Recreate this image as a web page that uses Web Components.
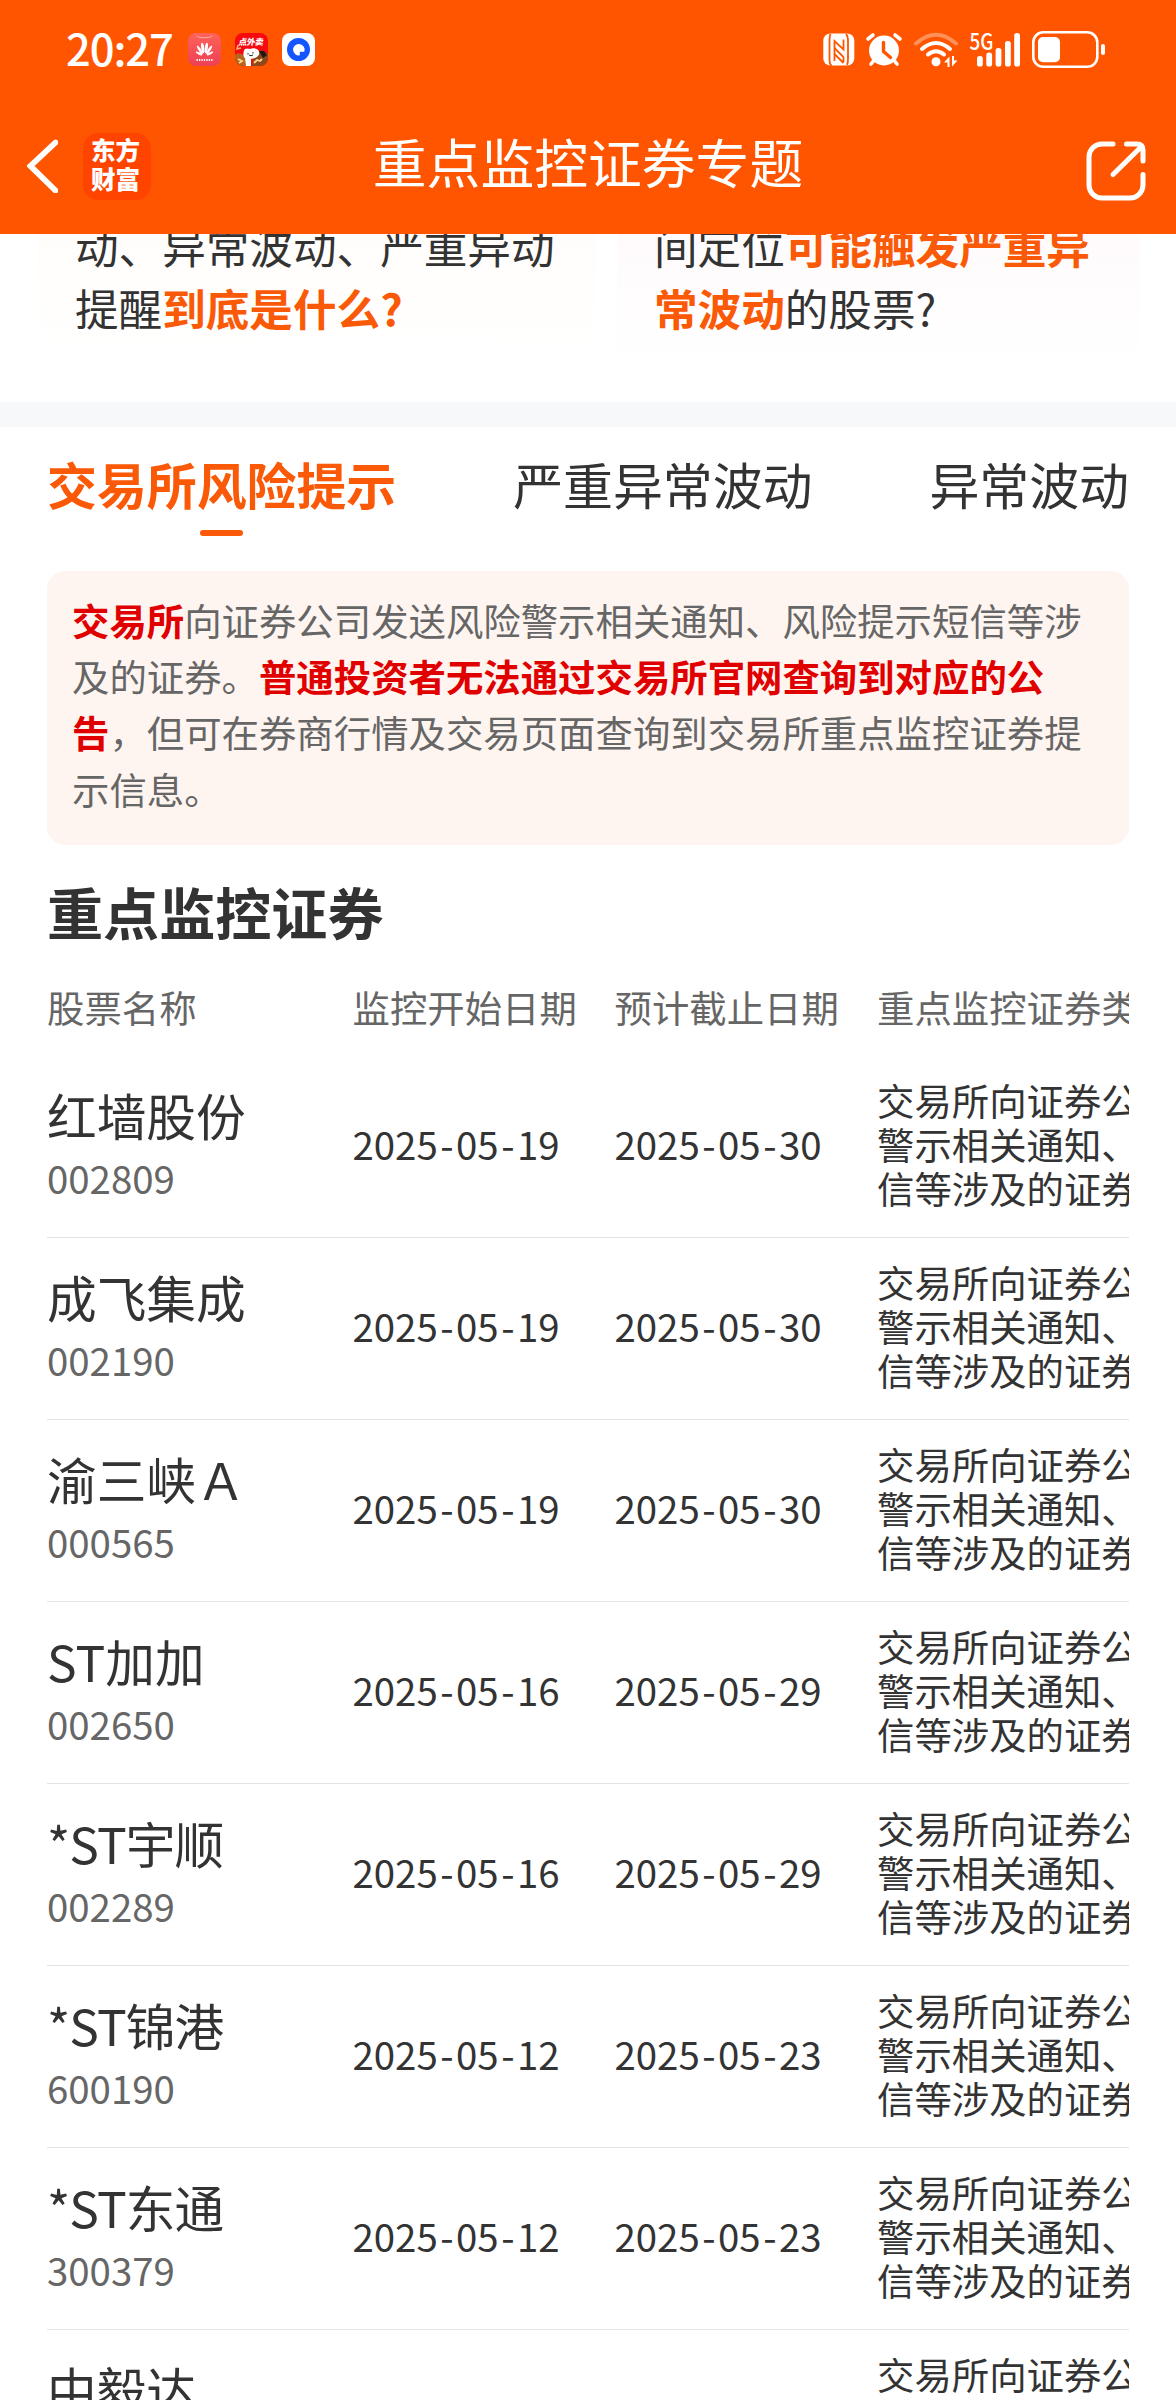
<!DOCTYPE html>
<html lang="zh-CN">
<head>
<meta charset="utf-8">
<title>重点监控证券专题</title>
<style>
html,body{margin:0;padding:0;background:#fff}
body{width:1176px;height:2400px;overflow:hidden;font-family:"Noto Sans CJK SC",sans-serif;color:#333}
</style>
</head>
<body>
<monitor-page></monitor-page>
<script>
const define = (name, html) => {
  const t = document.createElement('template');
  t.innerHTML = html;
  customElements.define(name, class extends HTMLElement {
    constructor() {
      super();
      this.attachShadow({mode: 'open'}).appendChild(t.content.cloneNode(true));
    }
  });
};

define('status-bar', `
<style>
:host{display:flex;height:98px;align-items:center;color:#fff;box-sizing:border-box;padding:1px 71px 0 66px;justify-content:space-between}
.l,.r{display:flex;align-items:center}
time{font-size:43.5px;line-height:44px;font-weight:500;letter-spacing:-1.1px;padding-bottom:4px;width:122px;white-space:nowrap}
.l{gap:14px}.l time{margin-right:-14px}
svg{display:block}
text{font-family:"Noto Sans CJK SC",sans-serif}
</style>
<div class="l">
<time>20:27</time>
<svg width="33" height="33" viewBox="0 0 33 33"><defs><linearGradient id="h" x1="0" y1="0" x2="0" y2="1"><stop offset="0" stop-color="#ff6259"/><stop offset="1" stop-color="#ed4055"/></linearGradient></defs><rect width="33" height="33" rx="8" fill="url(#h)"/><path d="M8.500 2.500c1 3 15 3 16 0" fill="none" stroke="#ffb3a8" stroke-width="1"/><g fill="#fff"><ellipse cx="14.700" cy="15" rx="1.500" ry="5.300" transform="rotate(-8 14.700 15)"/><ellipse cx="18.300" cy="15" rx="1.500" ry="5.300" transform="rotate(8 18.300 15)"/><ellipse cx="11.900" cy="17" rx="1.300" ry="5" transform="rotate(-33 11.900 17)"/><ellipse cx="21.100" cy="17" rx="1.300" ry="5" transform="rotate(33 21.100 17)"/><ellipse cx="11" cy="20.500" rx="1.100" ry="3.500" transform="rotate(-62 11 20.500)"/><ellipse cx="22" cy="20.500" rx="1.100" ry="3.500" transform="rotate(62 22 20.500)"/></g><path d="M8.500 27h16" stroke="#fff" stroke-width="2.200" stroke-dasharray="1.300 1.150"/></svg>
<svg width="33" height="33" viewBox="0 0 33 33"><defs><clipPath id="c"><rect width="33" height="33" rx="8"/></clipPath></defs><g clip-path="url(#c)"><rect width="33" height="33" fill="#f60a10"/><path d="M0 22c4-4 8 0 10 2l4 9H0z" fill="#b5651d"/><path d="M19 23l8-6 6 4v12H17z" fill="#8a4a1c"/><path d="M24 18l5 0 3 4-4 3z" fill="#1f1714"/><path d="M3 12l-1 4 4-1" stroke="#ffb27a" stroke-width="1.500" fill="none"/><path d="M9 18c0-3 4-3 6-2 4-2 9 0 9 3 1 3-2 5-4 6l-4 1v7h-5l-1-8c-2-1-2-5-1-7z" fill="#fff"/><path d="M13 20v1.500M18 19v1.500M14 22q2 1.500 4 0" stroke="#222" stroke-width="1" fill="none"/><path d="M3 26l4 2-3 2M19 30l3-3 3 1 2-2" stroke="#ffd58a" stroke-width="1.800" fill="none"/><text x="5" y="12" font-size="8.500" font-weight="900" fill="#fff" transform="skewX(-8)" textLength="25">点外卖</text></g></svg>
<svg width="33" height="33" viewBox="0 0 33 33"><rect width="33" height="33" rx="8" fill="#fff"/><circle cx="16.500" cy="16.500" r="11.500" fill="#1554ff"/><path d="M17 11a5.700 5.700 0 1 0 .8 11.300v-3.600h4.500A5.700 5.700 0 0 0 17 11z" fill="#fff"/></svg>
</div>
<div class="r">
<svg width="282" height="38" viewBox="823 31 282 38" fill="#fff">
<rect x="823.300" y="33.500" width="31" height="32" rx="7"/>
<g fill="none" stroke="#ff5500" stroke-width="1.800"><path d="M830.500 34q-1 2-1 6v20q0 4 2 6"/><path d="M847 65q1-2 1-6V40q0-4-2-6"/><path d="M834.500 61V41l9 8.500V39.500"/><path d="M834.500 48l9 9v5M834.500 54l9 9"/></g>
<circle cx="884" cy="50.500" r="15"/>
<g stroke="#fff" stroke-width="3.600" stroke-linecap="round" fill="none"><path d="M868 39l5-4M900 39l-5-4M875 59l-4 5M893 59l4 5"/></g>
<path d="M883.500 42.500v9l7 6" fill="none" stroke="#ff5500" stroke-width="3.400" stroke-linecap="round"/>
<g fill="none" stroke="#fff" stroke-linecap="round" stroke-width="4"><path d="M916 43.500q20-17.500 40 0" stroke-opacity=".35"/><path d="M922 49q14-12 28 0"/><path d="M928 54.500q8-6.500 16 0"/></g>
<circle cx="936" cy="61.800" r="4.500"/>
<path d="M944 62.500l5.500-6v10.500h-2v-4.500zM957.500 60.500l-5.500 6V56h2v4.500z"/>
<text x="969.500" y="49.500" font-size="22.500" font-weight="500" textLength="24" lengthAdjust="spacingAndGlyphs">5G</text>
<rect x="977" y="56" width="5.800" height="10.500" rx="2.600"/><rect x="986.300" y="52.500" width="5.800" height="14" rx="2.600"/><rect x="995.600" y="48" width="5.800" height="18.500" rx="2.600"/><rect x="1005" y="41" width="5.800" height="25.500" rx="2.600"/><rect x="1014.200" y="33" width="5.800" height="33.500" rx="2.600"/>
<rect x="1033.300" y="32.300" width="64" height="34.500" rx="10" fill="none" stroke="#fff" stroke-width="2.600"/>
<rect x="1038" y="37" width="22" height="25.300" rx="5"/><rect x="1101" y="44" width="4" height="11" rx="2"/>
</svg>
</div>`);

define('nav-bar', `
<style>
:host{display:flex;height:136px;align-items:center;color:#fff;box-sizing:border-box;padding:0 30px 0 27px}
.side{flex:1;display:flex;align-items:center}
.side.e{justify-content:flex-end;padding-top:9px}
h1{margin:0 -3px 0 0;font-size:53.8px;font-weight:400;line-height:60px;padding-bottom:10px;white-space:nowrap}
.logo{margin-left:25px;width:68px;height:67px;border-radius:15px;background:#ff4400;display:flex;flex-direction:column;align-items:flex-start;justify-content:center;font:900 24.500px/28.500px "Noto Sans CJK SC",sans-serif;padding:0 0 3px 8px;box-sizing:border-box}
svg{display:block}
</style>
<div class="side"><svg width="31" height="54" viewBox="27 139 31 54"><path d="M55.500 142.500L30.500 166l25 24.500" fill="none" stroke="#fff" stroke-width="5.800" stroke-linecap="round" stroke-linejoin="miter"/></svg><div class="logo"><span>东方</span><span>财富</span></div></div>
<h1><slot></slot></h1>
<div class="side e"><svg width="60" height="60" viewBox="0 0 60 60" fill="none" stroke="#fff" stroke-width="5" stroke-linecap="round" stroke-linejoin="round"><path d="M27 3H16A13 13 0 0 0 3 16v28a13 13 0 0 0 13 13h28a13 13 0 0 0 13-13V33.500"/><path d="M40.500 3H51q6 0 6 6v11M27 33.500L56 5"/></svg></div>`);

define('topic-card', `
<style>
:host{display:block;box-sizing:border-box;height:156px;padding:0 0 0 37.5px;font-size:43.6px;line-height:62px;white-space:nowrap;background:linear-gradient(var(--tint),#fff)}
::slotted(p){margin:0}
</style><slot></slot>`);

define('topic-cards', `
<style>
:host{display:block;height:168px;overflow:hidden;background:#fff}
.g{display:grid;grid-template-columns:557px 523px;gap:22px;padding-left:37.5px;margin-top:-20px}
p{margin:0}b{color:#fa5a08;font-weight:700}
</style>
<div class="g">
<topic-card style="--tint:#fffdfa"><p>动、异常波动、严重异动</p><p>提醒<b>到底是什么?</b></p></topic-card>
<topic-card style="--tint:#fffafb"><p>间定位<b>可能触发严重异</b></p><p><b>常波动</b>的股票?</p></topic-card>
</div>`);

define('tab-item', `
<style>
:host{display:flex;flex-direction:column;align-items:center;gap:17px;font-size:49.9px;line-height:60px;white-space:nowrap}
:host([active]){color:#fa5a08;font-weight:700}
i{width:43px;height:6px;border-radius:3px}
:host([active]) i{background:#fa5a08}
</style><span><slot></slot></span><i></i>`);

define('tab-bar', `
<style>:host{display:flex;justify-content:space-between;box-sizing:border-box;height:144px;padding:26px 47px 0}</style><slot></slot>`);

define('notice-box', `
<style>
:host{display:block;box-sizing:border-box;height:274px;margin:0 47px;padding:21px 25px 0;border-radius:18px;background:#fff5f0;color:#666;font-size:37.4px;line-height:56.2px}
::slotted(b){color:#e00000;font-weight:700}
</style><slot></slot>`);

define('table-grid', `
<style>
:host{display:grid;grid-template-columns:305.5px 262px 262.5px 252px;box-sizing:border-box;width:1082px;overflow:hidden;white-space:nowrap}
</style><slot></slot>`);

customElements.define('stock-row', class extends HTMLElement {
  connectedCallback() {
    const d = s => s.replace(/-/g, '<i>-</i>');
    const g = n => this.getAttribute(n) || '';
    this.attachShadow({mode: 'open'}).innerHTML = `
<style>
:host{display:block;box-sizing:border-box;height:182px;border-bottom:1px solid #e3e3e3}
.name{padding-top:28px;font-size:49.700px;line-height:60px}
.name.star{letter-spacing:-.9px}
.code{padding-top:11px;font-size:38.400px;line-height:44px;color:#666}
.date{padding-top:65px;font-size:38.400px;line-height:44px}
.date i{font-style:normal;padding:0 2.500px}
.kind{padding-top:22px;font-size:37.400px;line-height:44px;overflow:hidden}
.kind div{height:44px}
</style>
<table-grid>
<div><div class="name${g('name')[0] === '*' ? ' star' : ''}">${g('name')}</div><div class="code">${g('code')}</div></div>
<div class="date">${d(g('from'))}</div>
<div class="date">${d(g('to'))}</div>
<div class="kind"><div>交易所向证券公</div><div>警示相关通知、</div><div>信等涉及的证券</div></div>
</table-grid>`;
  }
});

define('stock-table', `
<style>
:host{display:block;margin:0 47px;width:1082px}
h2{margin:36px 0 36px;font-size:56.1px;line-height:60px;font-weight:700}
.head{height:79px;font-size:37.4px;line-height:60px;color:#666}
</style>
<h2>重点监控证券</h2>
<table-grid class="head"><span>股票名称</span><span>监控开始日期</span><span>预计截止日期</span><span>重点监控证券类</span></table-grid>
<slot></slot>`);

define('monitor-page', `
<style>
:host{display:block;height:2400px;overflow:hidden;background:#fff}
header{background:#ff5500;height:234px}
.band{height:25px;background:#f7f8fa}
</style>
<header><status-bar></status-bar><nav-bar>重点监控证券专题</nav-bar></header>
<topic-cards></topic-cards>
<div class="band"></div>
<tab-bar><tab-item active>交易所风险提示</tab-item><tab-item>严重异常波动</tab-item><tab-item>异常波动</tab-item></tab-bar>
<notice-box><b>交易所</b>向证券公司发送风险警示相关通知、风险提示短信等涉及的证券。<b>普通投资者无法通过交易所官网查询到对应的公告</b>，但可在券商行情及交易页面查询到交易所重点监控证券提示信息。</notice-box>
<stock-table>
<stock-row name="红墙股份" code="002809" from="2025-05-19" to="2025-05-30"></stock-row>
<stock-row name="成飞集成" code="002190" from="2025-05-19" to="2025-05-30"></stock-row>
<stock-row name="渝三峡Ａ" code="000565" from="2025-05-19" to="2025-05-30"></stock-row>
<stock-row name="ST加加" code="002650" from="2025-05-16" to="2025-05-29"></stock-row>
<stock-row name="*ST宇顺" code="002289" from="2025-05-16" to="2025-05-29"></stock-row>
<stock-row name="*ST锦港" code="600190" from="2025-05-12" to="2025-05-23"></stock-row>
<stock-row name="*ST东通" code="300379" from="2025-05-12" to="2025-05-23"></stock-row>
<stock-row name="中毅达"></stock-row>
</stock-table>`);
</script>
</body>
</html>
